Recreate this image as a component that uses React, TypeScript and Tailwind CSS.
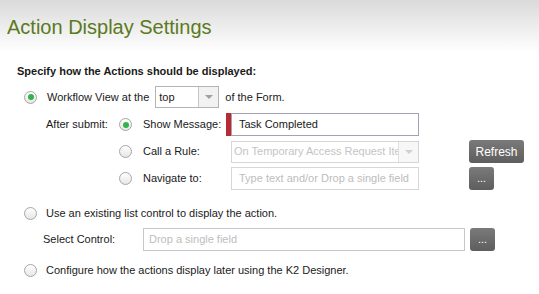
import React from "react"

function Radio({ checked }: { checked?: boolean }) {
  return (
    <span className="flex h-[13px] w-[13px] shrink-0 items-center justify-center rounded-full border border-[#a6a6a6] bg-gradient-to-b from-[#ffffff] to-[#e6e6e6]">
      {checked && <span className="h-[6px] w-[6px] rounded-full bg-[#34b34a]" />}
    </span>
  )
}

function GrayButton({ label, wide }: { label: string; wide?: boolean }) {
  return (
    <button
      className={
        "flex h-[23px] items-center justify-center rounded-[3px] bg-gradient-to-b from-[#7a7a7a] to-[#5e5e5e] text-white " +
        (wide ? "w-[55px] text-[12px]" : "w-[25px] text-[11px]")
      }
    >
      {label}
    </button>
  )
}

function Arrow({ light }: { light?: boolean }) {
  return (
    <span className={"flex h-full w-[20px] shrink-0 items-center justify-center border-l " + (light ? "border-[#dedede] bg-[#f7f7f7]" : "border-[#c8c8c8] bg-[#f2f2f2]")}>
      <svg width="8" height="4" viewBox="0 0 8 4">
        <path d="M0 0h8L4 4z" fill={light ? "#d0d0d0" : "#a0a0a0"} />
      </svg>
    </span>
  )
}

export default function App() {
  return (
    <div className="h-[294px] w-[539px] overflow-hidden whitespace-nowrap bg-white text-[11px] text-[#1a1a1a]" style={{ fontFamily: '"Liberation Sans", Arial, sans-serif' }}>
      <div className="h-[52px] bg-gradient-to-b from-[#dadada] to-[#ffffff] pl-[7px] pt-[16px]">
        <h1 className="text-[20px] leading-[23px] text-[#5a7a1d]">Action Display Settings</h1>
      </div>

      <div className="flex flex-col">
        <div className="mt-[10px] flex h-[18px] items-center pl-[17px] font-bold">
          Specify how the Actions should be displayed:
        </div>

        {/* workflow view */}
        <div className="mt-[6px] flex h-[22px] items-center pl-[24px]">
          <Radio checked />
          <span className="ml-[10px]">Workflow View at the</span>
          <div className="ml-[6px] flex h-[22px] w-[64px] items-center border border-[#b4b4b4] bg-white">
            <span className="flex-1 pl-[3px]">top</span>
            <Arrow />
          </div>
          <span className="ml-[6px]">of the Form.</span>
        </div>

        {/* after submit */}
        <div className="mt-[5px] flex h-[23px] items-center pl-[46px]">
          <span className="w-[73px]">After submit:</span>
          <Radio checked />
          <span className="ml-[11px] w-[83px]">Show Message:</span>
          <span className="h-[23px] w-[5px] bg-[#b92b33]" />
          <div className="flex h-[23px] w-[188px] items-center border border-[#a3a3b3] pl-[7px]">Task Completed</div>
        </div>

        <div className="mt-[4px] flex h-[23px] items-center pl-[119px]">
          <Radio />
          <span className="ml-[11px] w-[88px]">Call a Rule:</span>
          <div className="flex h-[22px] w-[188px] items-center overflow-hidden border border-[#d6d6d6]">
            <span className="flex-1 overflow-hidden pl-[2px] text-[#c4c4c4]">On Temporary Access Request Item</span>
            <Arrow light />
          </div>
          <span className="ml-[50px]">
            <GrayButton label="Refresh" wide />
          </span>
        </div>

        <div className="mt-[4px] flex h-[23px] items-center pl-[119px]">
          <Radio />
          <span className="ml-[11px] w-[88px]">Navigate to:</span>
          <div className="flex h-[23px] w-[188px] items-center border border-[#d6d6d6] pl-[7px] text-[#bdbdbd]">
            Type text and/or Drop a single field
          </div>
          <span className="ml-[50px]">
            <GrayButton label="..." />
          </span>
        </div>

        {/* list control */}
        <div className="mt-[14px] flex h-[18px] items-center pl-[24px]">
          <Radio />
          <span className="ml-[9px]">Use an existing list control to display the action.</span>
        </div>

        <div className="mt-[6px] flex h-[23px] items-center pl-[43px]">
          <span className="w-[100px]">Select Control:</span>
          <div className="flex h-[23px] w-[322px] items-center border border-[#c6c6ce] pl-[5px] text-[#bdbdbd]">Drop a single field</div>
          <span className="ml-[5px]">
            <GrayButton label="..." />
          </span>
        </div>

        <div className="mt-[10px] flex h-[18px] items-center pl-[24px]">
          <Radio />
          <span className="ml-[9px]">Configure how the actions display later using the K2 Designer.</span>
        </div>
      </div>
    </div>
  )
}
